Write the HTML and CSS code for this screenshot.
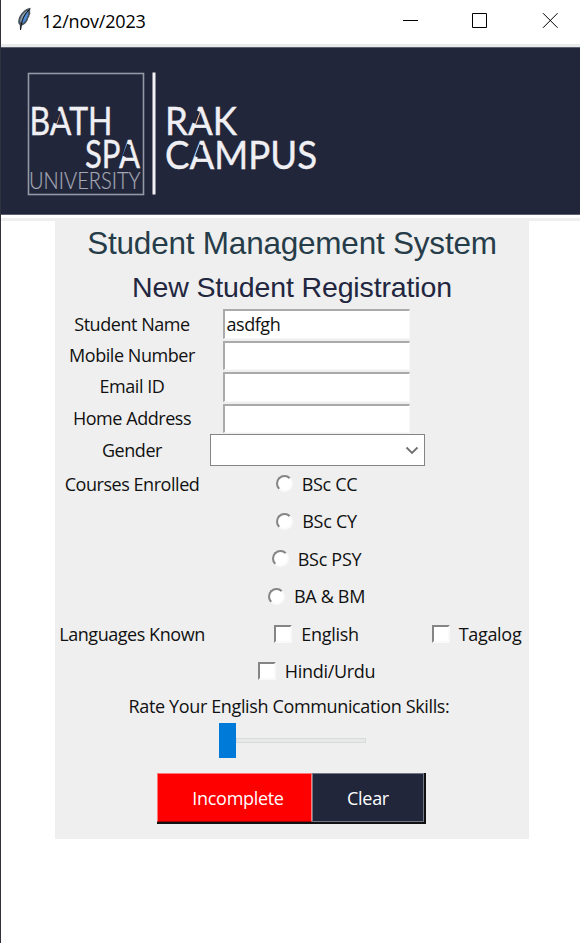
FILE: index.html
```html
<!DOCTYPE html>
<html lang="en">
<head>
<meta charset="utf-8">
<title>12/nov/2023</title>
<link rel="stylesheet" href="styles.css">
</head>
<body>
<div class="window">
  <header class="titlebar">
    <svg class="feather" width="18" height="26" viewBox="0 0 18 26">
      <path d="M14.8 .8C9 1.5 3.5 7 2.3 13.2c-.4 2.2.2 4 1.5 4.9l.2 5 1-.2.8-4.5c3-.6 6.2-4.3 6.4-7.5l1-.8c-.2-1 .2-2 1.2-3.2-.4-2.2-.5-4.2.4-6.1z" fill="#46525e"/>
      <path d="M11.8 3.2C8 5 4.8 9.3 4 14.2l1.2 1.9C6 11.5 8.5 6.8 11.8 3.2z" fill="#8fa0ae"/>
      <path d="M11.8 4.3C8.4 8 6.4 12 5.7 16.5c2.7-1 4.8-3.5 5.2-6l1.3-3.3c.2-1 .1-2-.4-2.9z" fill="#4b8cd6"/>
      <path d="M13.6 2.3C9 6.8 5.5 12 4.5 22.8" stroke="#111" stroke-width="1" fill="none"/>
    </svg>
    <span class="caption">12/nov/2023</span>
    <svg class="controls" width="157" height="18" viewBox="0 0 157 18">
      <path d="M0 8.5h15M69.5 1.5h14v14h-14zM140 1.2l14.6 14.6M154.6 1.2L140 15.8" fill="none" stroke="#000" stroke-width="1"/>
    </svg>
  </header>
  <div class="banner">
    <svg class="logo" width="300" height="126" viewBox="0 0 300 126">
      <rect x="2.5" y="3.5" width="115" height="121" fill="none" stroke="#9598a5" stroke-width="1.6"/>
      <rect x="126.500" y="2.5" width="3" height="122" fill="#f2f2f5"/>
      <g class="lettering">
        <text x="3.5" y="64.5" textLength="83" lengthAdjust="spacingAndGlyphs">BATH</text>
        <text x="59" y="98" textLength="55" lengthAdjust="spacingAndGlyphs">SPA</text>
        <text x="139" y="64.5" textLength="72" lengthAdjust="spacingAndGlyphs">RAK</text>
        <text x="139" y="98.5" textLength="152" lengthAdjust="spacingAndGlyphs">CAMPUS</text>
        <text class="thin" x="3" y="119" textLength="111.5" lengthAdjust="spacingAndGlyphs">UNIVERSITY</text>
      </g>
      <path class="stencil" d="M28.500 53l4.500-12M98.500 86.500l4.500-12M167.500 53l4.500-12M171 87l4.500-12"/>
    </svg>
  </div>
  <div class="strip"></div>
  <main class="panel">
    <h1>Student Management System</h1>
    <h2>New Student Registration</h2>
    <form class="form">
      <div class="row entry-row"><label>Student Name</label><div class="entry">asdfgh</div></div>
      <div class="row entry-row"><label>Mobile Number</label><div class="entry"></div></div>
      <div class="row entry-row"><label>Email ID</label><div class="entry"></div></div>
      <div class="row entry-row"><label>Home Address</label><div class="entry"></div></div>
      <div class="row combo-row"><label>Gender</label><div class="combo">
        <svg width="14" height="9" viewBox="0 0 14 9"><path d="M1.5 1.5L7 7l5.5-5.5" fill="none" stroke="#707070" stroke-width="1.8"/></svg>
      </div></div>
      <div class="row"><label>Courses Enrolled</label><div class="choice"><i class="radio"></i>BSc CC</div></div>
      <div class="row"><span></span><div class="choice"><i class="radio"></i>BSc CY</div></div>
      <div class="row"><span></span><div class="choice"><i class="radio"></i>BSc PSY</div></div>
      <div class="row"><span></span><div class="choice"><i class="radio"></i>BA &amp; BM</div></div>
      <div class="row"><label>Languages Known</label><div class="choice"><i class="check"></i>English</div><div class="choice"><i class="check"></i>Tagalog</div></div>
      <div class="row"><span></span><div class="choice"><i class="check"></i>Hindi/Urdu</div></div>
    </form>
    <p class="rate">Rate Your English Communication Skills:</p>
    <div class="slider"><div class="thumb"></div><div class="track"></div></div>
    <div class="actions"><div class="button red">Incomplete</div><div class="button navy">Clear</div></div>
  </main>
</div>
</body>
</html>
```
FILE: styles.css
```css
* { box-sizing: border-box; }
body { margin: 0; background: #fff; color: #111; font: 18px/24px "Open Sans", sans-serif; letter-spacing: -0.45px; }
.window { height: 943px; border-left: 1px solid #30323c; overflow: hidden; }
.titlebar { height: 47px; display: flex; align-items: flex-start; background: #fff; border-bottom: 3px solid #e9eaeb; }
.feather { margin: 7px 0 0 15px; }
.caption { margin: 9px 0 0 8px; color: #000; letter-spacing: -0.2px; }
.controls { margin: 12px 20px 0 auto; }
.banner { height: 168px; background: #22263b; border-top: 1px solid #5c5f70; border-bottom: 1px solid #5c5f70; padding: 22px 0 0 25px; }
.logo { display: block; }
.lettering { fill: #f0f0f4; stroke: #f0f0f4; stroke-width: 0.4; font: 400 39px Lato, sans-serif; letter-spacing: 0; }
.lettering .thin { fill: #a5a7b3; stroke: #a5a7b3; stroke-width: 0.2; font-size: 22.5px; font-weight: 300; }
.stencil { fill: none; stroke: #22263b; stroke-width: 4; }
.strip { height: 3px; margin-top: 3px; background: #efefef; }
.panel { width: 474px; height: 618px; margin-left: 54px; background: #efefef; display: flex; flex-direction: column; }
h1, h2 { margin: 0; font-family: "Liberation Sans", sans-serif; font-weight: 400; text-align: center; white-space: nowrap; }
h1 { height: 45px; font-size: 31.5px; line-height: 45px; letter-spacing: -0.22px; color: #263d49; }
h2 { height: 42.5px; font-size: 28.5px; line-height: 43px; letter-spacing: -0.14px; color: #22263f; }
.row { display: grid; grid-template-columns: 154px 215px 105px; align-items: center; justify-items: center; height: 37.5px; white-space: nowrap; }
.row label { margin-top: -1px; }
.entry-row, .combo-row { height: 31.4px; }
.entry { width: 187px; height: 29.5px; margin-right: 1px; background: #fff; border: 1px solid #f8f8f8; border-top: 2px solid #aaa; border-left: 2px solid #aaa; padding: 1px 2px; }
.combo { width: 215px; height: 32px; background: #fff; border: 1.5px solid #858585; display: flex; align-items: center; justify-content: flex-end; padding-right: 5px; margin-left: 1px; }
.choice { display: flex; align-items: center; gap: 9px; margin-top: -1px; letter-spacing: -0.3px; }
.radio { width: 17px; height: 17px; border-radius: 50%; background: #fff; border: 2px solid #fafafa; border-top-color: #858585; border-left-color: #858585; }
.check { width: 18px; height: 18px; background: #fff; border: 2px solid #f9f9f9; border-top: 2px solid #858585; border-left: 2px solid #858585; }
.rate { margin: 3.5px 6px 0 0; height: 28.5px; text-align: center; letter-spacing: -0.36px; }
.slider { display: flex; align-items: center; width: 147px; height: 36px; margin: 0 auto; }
.thumb { width: 17px; height: 35px; background: #007ad9; }
.track { flex: 1; height: 5px; background: #e7e9e9; border: 1px solid #d6dada; }
.actions { display: flex; margin: 14.5px 0 0 102px; width: 269px; height: 51px; background: #111; padding: 0 2px 2px 0; }
.button { display: flex; align-items: center; justify-content: center; color: #fff; border: 1px solid; padding-top: 1px; letter-spacing: -0.3px; }
.red { width: 155px; padding-left: 7px; background: #f00; border-color: #ff7878 #ff7878 #a00000; }
.navy { flex: 1; background: #22263b; border-color: #737685; }
```
